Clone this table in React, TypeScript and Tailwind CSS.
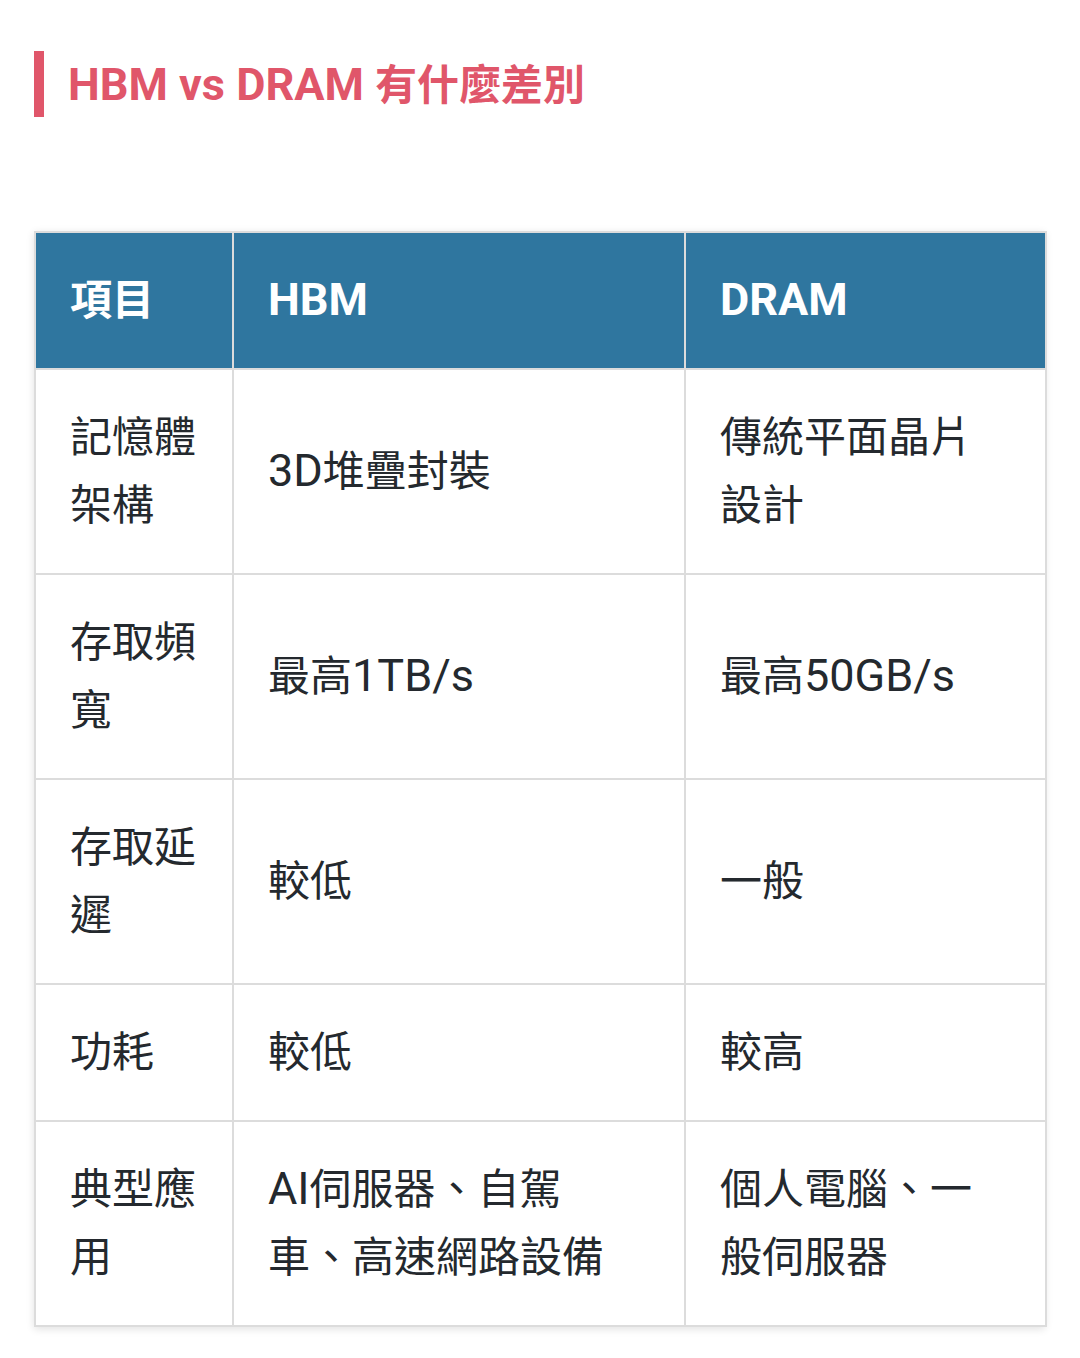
import React from 'react';

const rows: { item: string; hbm: string; dram: string }[] = [
  { item: '記憶體架構', hbm: '3D堆疊封裝', dram: '傳統平面晶片設計' },
  { item: '存取頻寬', hbm: '最高1TB/s', dram: '最高50GB/s' },
  { item: '存取延遲', hbm: '較低', dram: '一般' },
  { item: '功耗', hbm: '較低', dram: '較高' },
  { item: '典型應用', hbm: 'AI伺服器、自駕車、高速網路設備', dram: '個人電腦、一般伺服器' },
];

// latin runs render a bit larger than the CJK glyphs in the reference
const Mixed: React.FC<{ text: string }> = ({ text }) => {
  const parts = text.split(/([A-Za-z0-9/ ]+)/).filter(Boolean);
  return (
    <>
      {parts.map((p, i) =>
        /[A-Za-z0-9]/.test(p) ? (
          <span key={i} className="text-[45px] leading-none">
            {p}
          </span>
        ) : (
          <React.Fragment key={i}>{p}</React.Fragment>
        )
      )}
    </>
  );
};

const App: React.FC = () => {
  return (
    <div
      className="min-h-[1358px] w-[1080px] bg-white pt-[51px]"
      style={{ fontFamily: 'Roboto, "Noto Sans CJK TC", sans-serif' }}
    >
      <div className="ml-[34px] flex h-[66px] items-center border-l-[10px] border-[#e0566a] pl-[24px]">
        <h2 className="text-[42px] font-bold leading-none text-[#e0566a]">
          <Mixed text="HBM vs DRAM 有什麼差別" />
        </h2>
      </div>

      <div className="mx-[34px] mt-[114px] w-[1011px] shadow-[0_2px_8px_rgba(0,0,0,0.12)]">
        <table className="w-full table-fixed border-collapse text-[42px] leading-[68px] text-[#24292e]">
          <colgroup>
            <col className="w-[198px]" />
            <col className="w-[452px]" />
            <col className="w-[361px]" />
          </colgroup>
          <thead>
            <tr className="bg-[#2f769f] text-white">
              <th className="h-[137px] border-2 border-[#dcdcdc] pl-[34px] pr-[20px] text-left font-bold">項目</th>
              <th className="border-2 border-[#dcdcdc] pl-[34px] pr-[20px] text-left font-bold">
                <Mixed text="HBM" />
              </th>
              <th className="border-2 border-[#dcdcdc] pl-[34px] pr-[20px] text-left font-bold">
                <Mixed text="DRAM" />
              </th>
            </tr>
          </thead>
          <tbody>
            {rows.map((r, i) => (
              <tr key={i}>
                <td className="border-2 border-[#dcdcdc] py-[33.5px] pl-[34px] pr-[28px] align-middle">{r.item}</td>
                <td className="border-2 border-[#dcdcdc] py-[33.5px] pl-[34px] pr-[40px] align-middle">
                  <Mixed text={r.hbm} />
                </td>
                <td className="border-2 border-[#dcdcdc] py-[33.5px] pl-[34px] pr-[50px] align-middle">
                  <Mixed text={r.dram} />
                </td>
              </tr>
            ))}
          </tbody>
        </table>
      </div>
    </div>
  );
};

export default App;
